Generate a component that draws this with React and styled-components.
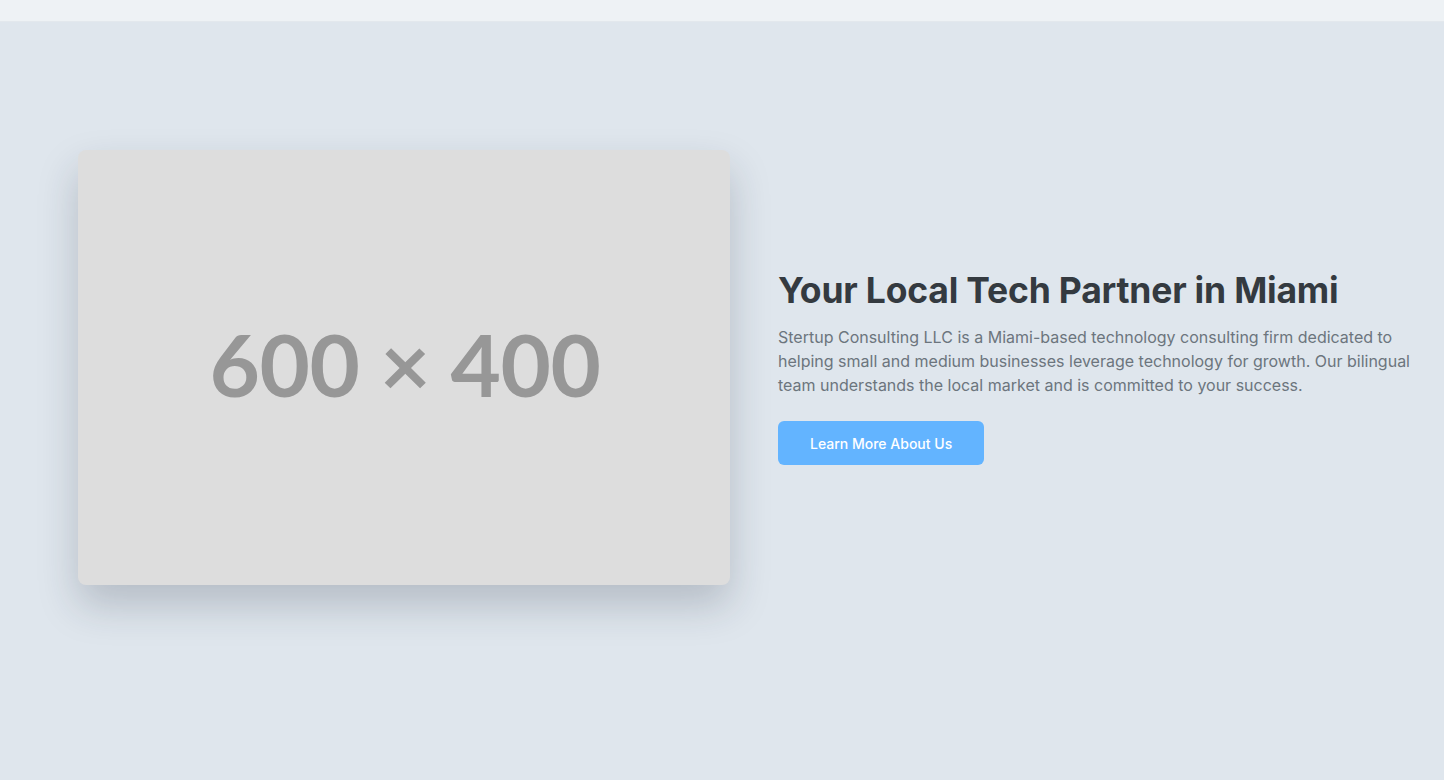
import React from "react";
import styled, { createGlobalStyle } from "styled-components";

const GlobalStyle = createGlobalStyle`
  * { box-sizing: border-box; }
  body {
    margin: 0;
    background: #dfe6ed;
    font-family: Inter, "Noto Sans", sans-serif;
  }
`;

const TopStrip = styled.div`
  height: 22px;
  background: #eef2f5;
  border-bottom: 1px solid #e3e8ed;
`;

const Section = styled.section`
  background: #dfe6ed;
  min-height: 758px;
  padding: 128px 14px 128px 78px;
`;

const Row = styled.div`
  display: grid;
  grid-template-columns: 652px 1fr;
  gap: 48px;
  align-items: center;
`;

const Placeholder = styled.div`
  height: 435px;
  background: #dddddd;
  border-radius: 8px;
  box-shadow: 0 20px 40px rgba(30, 40, 60, 0.22);
  display: flex;
  align-items: center;
  justify-content: center;
  padding-left: 2px;
`;

const PlaceholderLabel = styled.span`
  font-family: Lato, "Open Sans", sans-serif;
  font-size: 87px;
  font-weight: 700;
  color: #979797;
  letter-spacing: -0.5px;
  margin-top: -8px;
`;

const Content = styled.div`
  display: flex;
  flex-direction: column;
  align-items: flex-start;
`;

const Heading = styled.h2`
  margin: 0 0 13px;
  font-size: 35.5px;
  font-weight: 700;
  line-height: 1.2;
  color: #343a40;
  letter-spacing: -0.2px;
`;

const Text = styled.p`
  margin: 0 0 24px;
  font-size: 16px;
  line-height: 24px;
  color: #6c757d;
  max-width: 650px;
`;

const Button = styled.a`
  display: inline-flex;
  align-items: center;
  height: 44px;
  padding: 0 32px;
  background: #63b4ff;
  color: #ffffff;
  border-radius: 6px;
  font-size: 14px;
  font-weight: 500;
  text-decoration: none;
  cursor: pointer;
`;

const App = () => {
  return (
    <>
      <GlobalStyle />
      <TopStrip />
      <Section>
        <Row>
          <Placeholder>
            <PlaceholderLabel>600 × 400</PlaceholderLabel>
          </Placeholder>
          <Content>
            <Heading>Your Local Tech Partner in Miami</Heading>
            <Text>
              Stertup Consulting LLC is a Miami-based technology consulting firm
              dedicated to helping small and medium businesses leverage
              technology for growth. Our bilingual team understands the local
              market and is committed to your success.
            </Text>
            <Button>Learn More About Us</Button>
          </Content>
        </Row>
      </Section>
    </>
  );
};

export default App;
